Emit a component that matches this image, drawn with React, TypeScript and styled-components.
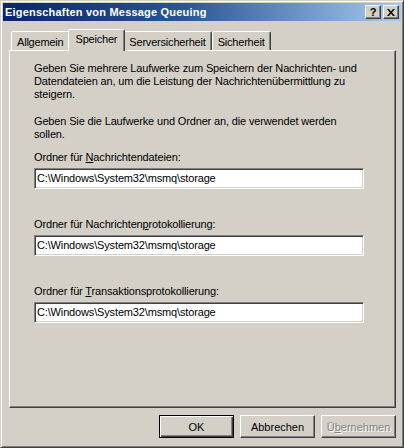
import React from 'react'
import styled, { createGlobalStyle, css } from 'styled-components'

const GlobalStyle = createGlobalStyle`
  html, body {
    margin: 0;
    padding: 0;
    background: #d4d0c8;
  }
  body {
    font-family: Tahoma, "Liberation Sans", Arial, sans-serif;
    font-size: 11px;
    color: #000;
  }
`

const Window = styled.div`
  box-sizing: border-box;
  width: 404px;
  height: 448px;
  background: #d4d0c8;
  border: 1px solid;
  border-color: #d4d0c8 #404040 #404040 #d4d0c8;
  box-shadow: inset 1px 1px #fff, inset -1px -1px #808080;
  padding: 2px;
  display: flex;
  flex-direction: column;
`

const TitleBar = styled.div`
  height: 18px;
  display: flex;
  align-items: center;
  padding: 0 2px 0 2px;
  background: linear-gradient(to right, #0a246a 0%, #2a5593 45%, #a6caf0 100%);
`

const TitleText = styled.div`
  flex: 1;
  color: #fff;
  font-weight: bold;
  font-size: 11px;
  letter-spacing: 0.2px;
  line-height: 18px;
`

const CaptionButton = styled.div`
  box-sizing: border-box;
  width: 16px;
  height: 14px;
  margin-left: 2px;
  background: #d4d0c8;
  border: 1px solid;
  border-color: #fff #404040 #404040 #fff;
  box-shadow: inset -1px -1px #808080;
  display: flex;
  align-items: center;
  justify-content: center;
  font-weight: bold;
  font-size: 11px;
  line-height: 12px;
`

const Body = styled.div`
  flex: 1;
  display: flex;
  flex-direction: column;
  padding: 8px 5px 0 6px;
`

const TabStrip = styled.div`
  display: flex;
  align-items: flex-end;
  height: 21px;
  padding-left: 2px;
  position: relative;
  z-index: 1;
`

const Tab = styled.div<{ $active?: boolean }>`
  box-sizing: border-box;
  height: 19px;
  padding: 3px 5px 0 5px;
  background: #d4d0c8;
  border: 1px solid;
  border-bottom: none;
  border-color: #fff #404040 transparent #fff;
  border-radius: 2px 2px 0 0;
  box-shadow: inset -1px 0 #808080;
  line-height: 14px;
  letter-spacing: -0.2px;
  white-space: nowrap;
  ${(p) =>
    p.$active &&
    css`
      height: 22px;
      margin: 0 -2px -1px -2px;
      padding: 2px 7px 0 7px;
      position: relative;
      z-index: 2;
    `}
`

const Panel = styled.div`
  box-sizing: border-box;
  width: 387px;
  height: 358px;
  border: 1px solid;
  border-color: #fff #404040 #404040 #fff;
  box-shadow: inset -1px -1px #808080;
  padding: 11px 24px 0 24px;
  display: flex;
  flex-direction: column;
`

const Para = styled.p`
  margin: 0;
  line-height: 13px;
  letter-spacing: -0.15px;
  & + & {
    margin-top: 14px;
  }
`

const FieldGroup = styled.div<{ $first?: boolean }>`
  display: flex;
  flex-direction: column;
  gap: 4px;
  margin-top: ${(p) => (p.$first ? '10px' : '29px')};
`

const Label = styled.div`
  line-height: 13px;
  letter-spacing: -0.15px;
`

const Key = styled.span`
  text-decoration: underline;
`

const TextBox = styled.div`
  box-sizing: border-box;
  width: 330px;
  height: 21px;
  background: #fff;
  border: 1px solid;
  border-color: #808080 #fff #fff #808080;
  box-shadow: inset 1px 1px #404040, inset -1px -1px #d4d0c8;
  padding: 0 2px;
  line-height: 19px;
  letter-spacing: -0.15px;
  white-space: nowrap;
`

const ButtonRow = styled.div`
  display: flex;
  justify-content: flex-end;
  gap: 6px;
  padding: 7px 0 0 0;
  width: 387px;
`

const Button = styled.div<{ $default?: boolean; $disabled?: boolean }>`
  box-sizing: border-box;
  width: 75px;
  height: 23px;
  display: flex;
  align-items: center;
  justify-content: center;
  background: #d4d0c8;
  border: 1px solid;
  border-color: #fff #404040 #404040 #fff;
  box-shadow: inset -1px -1px #808080;
  ${(p) =>
    p.$default &&
    css`
      border: 1px solid #000;
      box-shadow: inset 1px 1px #fff, inset -1px -1px #404040, inset -2px -2px #808080;
    `}
  ${(p) =>
    p.$disabled &&
    css`
      color: #808080;
      text-shadow: 1px 1px #fff;
    `}
`

export default function App() {
  return (
    <>
      <GlobalStyle />
      <Window>
        <TitleBar>
          <TitleText>Eigenschaften von Message Queuing</TitleText>
          <CaptionButton>?</CaptionButton>
          <CaptionButton>
            <svg width="8" height="7" viewBox="0 0 8 7">
              <path d="M0 0h2l2 2.5L6 0h2L5 3.5 8 7H6L4 4.5 2 7H0l3-3.5z" fill="#000" />
            </svg>
          </CaptionButton>
        </TitleBar>
        <Body>
          <TabStrip>
            <Tab>Allgemein</Tab>
            <Tab $active>Speicher</Tab>
            <Tab>Serversicherheit</Tab>
            <Tab>Sicherheit</Tab>
          </TabStrip>
          <Panel>
            <Para>
              Geben Sie mehrere Laufwerke zum Speichern der Nachrichten- und
              <br />
              Datendateien an, um die Leistung der Nachrichtenübermittlung zu
              <br />
              steigern.
            </Para>
            <Para>
              Geben Sie die Laufwerke und Ordner an, die verwendet werden
              <br />
              sollen.
            </Para>
            <FieldGroup $first>
              <Label>
                Ordner für <Key>N</Key>achrichtendateien:
              </Label>
              <TextBox>C:\Windows\System32\msmq\storage</TextBox>
            </FieldGroup>
            <FieldGroup>
              <Label>
                Ordner für Nachrichten<Key>p</Key>rotokollierung:
              </Label>
              <TextBox>C:\Windows\System32\msmq\storage</TextBox>
            </FieldGroup>
            <FieldGroup>
              <Label>
                Ordner für <Key>T</Key>ransaktionsprotokollierung:
              </Label>
              <TextBox>C:\Windows\System32\msmq\storage</TextBox>
            </FieldGroup>
          </Panel>
          <ButtonRow>
            <Button $default>OK</Button>
            <Button>Abbrechen</Button>
            <Button $disabled>
              Ü<Key>b</Key>ernehmen
            </Button>
          </ButtonRow>
        </Body>
      </Window>
    </>
  )
}
